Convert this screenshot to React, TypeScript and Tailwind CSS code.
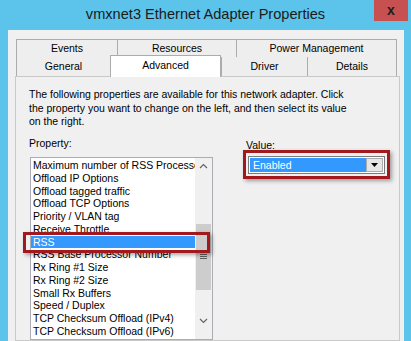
import React from 'react';

const topTabs = [
  { label: 'Events', w: 'w-[101px]' },
  { label: 'Resources', w: 'w-[119px]' },
  { label: 'Power Management', w: 'w-[161px] border-r' },
];

const bottomTabs = [
  { label: 'General', w: 'w-[94px]', active: false },
  { label: 'Advanced', w: 'w-[111px]', active: true },
  { label: 'Driver', w: 'w-[86px]', active: false },
  { label: 'Details', w: 'w-[90px] border-r', active: false },
];

const properties = [
  'Maximum number of RSS Processors',
  'Offload IP Options',
  'Offload tagged traffic',
  'Offload TCP Options',
  'Priority / VLAN tag',
  'Receive Throttle',
  'RSS',
  'RSS Base Processor Number',
  'Rx Ring #1 Size',
  'Rx Ring #2 Size',
  'Small Rx Buffers',
  'Speed / Duplex',
  'TCP Checksum Offload (IPv4)',
  'TCP Checksum Offload (IPv6)',
];

const Chevron = ({ up }: { up?: boolean }) => (
  <svg width="9" height="6" viewBox="0 0 9 6" fill="none">
    <polyline
      points={up ? '1,5 4.5,1.5 8,5' : '1,1 4.5,4.5 8,1'}
      stroke="#606060"
      strokeWidth="1.1"
    />
  </svg>
);

const App = () => {
  return (
    <div className="w-[411px] h-[341px] bg-[#5cc4ea] overflow-hidden flex flex-col font-['Liberation_Sans',Arial,sans-serif] text-black">
      {/* title bar */}
      <div className="h-[30px] relative flex justify-center pt-[5px] shrink-0">
        <span className="text-[14.6px] leading-[18px] text-[#1b1b1b]">vmxnet3 Ethernet Adapter Properties</span>
        <div className="absolute right-[3px] top-0 w-[34px] h-[21px] bg-[#c75050] flex items-center justify-center">
          <span className="text-[14px] font-bold leading-none text-[#1e1e1e] -mt-[2px]">x</span>
        </div>
      </div>

      {/* client area */}
      <div className="ml-[8px] mr-[7px] flex-1 bg-[#f0f0f0] pt-[9px] flex flex-col">
        <div className="ml-[8px] w-[381px] text-[10.5px]">
          <div className="flex h-[18px]">
            {topTabs.map((t, i) => (
              <div key={'top' + i} className={'border-t border-l border-[#acacac] bg-[#eeeeee] flex items-center justify-center ' + t.w}>
                {t.label}
              </div>
            ))}
          </div>
          <div className="flex h-[19px] border-t border-[#acacac] items-end">
            {bottomTabs.map((t, i) =>
              t.active ? (
                <div
                  key={'bot' + i}
                  className={'relative z-10 -mt-[3px] h-[22px] -mb-[1px] bg-white border-l border-t border-r border-[#acacac] flex justify-center pt-[2px] ' + t.w}
                >
                  {t.label}
                </div>
              ) : (
                <div key={'bot' + i} className={'h-[19px] border-l border-[#acacac] bg-[#eeeeee] flex items-center justify-center ' + t.w}>
                  {t.label}
                </div>
              )
            )}
          </div>
        </div>

        {/* tab page */}
        <div className="ml-[7px] w-[385px] flex-1 border border-[#c9c9c9] bg-[#f0f0f0] pl-[13px] pt-[11px] text-[10.5px]">
          <p className="leading-[13.5px]">
            The following properties are available for this network adapter. Click
            <br />
            the property you want to change on the left, and then select its value
            <br />
            on the right.
          </p>

          <div className="flex mt-[8px]">
            <div className="flex flex-col">
              <span className="leading-[13.5px]">Property:</span>
              <div className="relative mt-[6.5px] ml-[1px]">
                <div className="w-[183px] h-[183px] border border-[#abadb3] bg-white flex">
                  <div className="flex-1 overflow-hidden pt-[1.6px]">
                    {properties.map((p, i) => (
                      <div
                        key={p}
                        className={
                          'h-[12.75px] leading-[12.75px] pl-[2px] whitespace-nowrap ' +
                          (i === 6 ? 'bg-[#3399ff] text-white' : '')
                        }
                      >
                        {p}
                      </div>
                    ))}
                  </div>
                  <div className="w-[17px] bg-[#f0f0f0] flex flex-col items-center">
                    <div className="h-[17px] flex items-center justify-center">
                      <Chevron up />
                    </div>
                    <div className="h-[49px]" />
                    <div className="w-[15px] h-[66px] bg-[#cdcdcd] flex flex-col items-center justify-center gap-[1px]">
                      <div className="w-[7px] h-[1px] bg-[#606060]" />
                      <div className="w-[7px] h-[1px] bg-[#606060]" />
                      <div className="w-[7px] h-[1px] bg-[#606060]" />
                    </div>
                    <div className="flex-1" />
                    <div className="h-[17px] flex items-center justify-center mb-[9px]">
                      <Chevron />
                    </div>
                  </div>
                </div>
                <div className="absolute left-[-7px] top-[75px] w-[187px] h-[21px] border-[3px] border-[#a3181d] shadow-[2px_2px_4px_rgba(0,0,0,0.35)]" />
              </div>
            </div>

            <div className="flex flex-col ml-[30px]">
              <span className="leading-[12px] mt-[2px] pl-[3px]">Value:</span>
              <div className="-mt-[1px] border-[3px] border-[#a3181d] px-[2px] pt-[3px] pb-[2px] shadow-[2px_2px_4px_rgba(0,0,0,0.35)]">
                <div className="w-[137px] h-[18px] border border-[#7a7a7a] bg-white p-[1px] flex">
                  <div className="flex-1 bg-[#3399ff] text-white pl-[3px] leading-[14px]">Enabled</div>
                  <div className="w-[17px] bg-[#e6e6e6] border border-[#acacac] flex items-center justify-center">
                    <svg width="7" height="4" viewBox="0 0 7 4">
                      <polygon points="0,0 7,0 3.5,4" fill="#000" />
                    </svg>
                  </div>
                </div>
              </div>
            </div>
          </div>
        </div>
      </div>
    </div>
  );
};

export default App;
